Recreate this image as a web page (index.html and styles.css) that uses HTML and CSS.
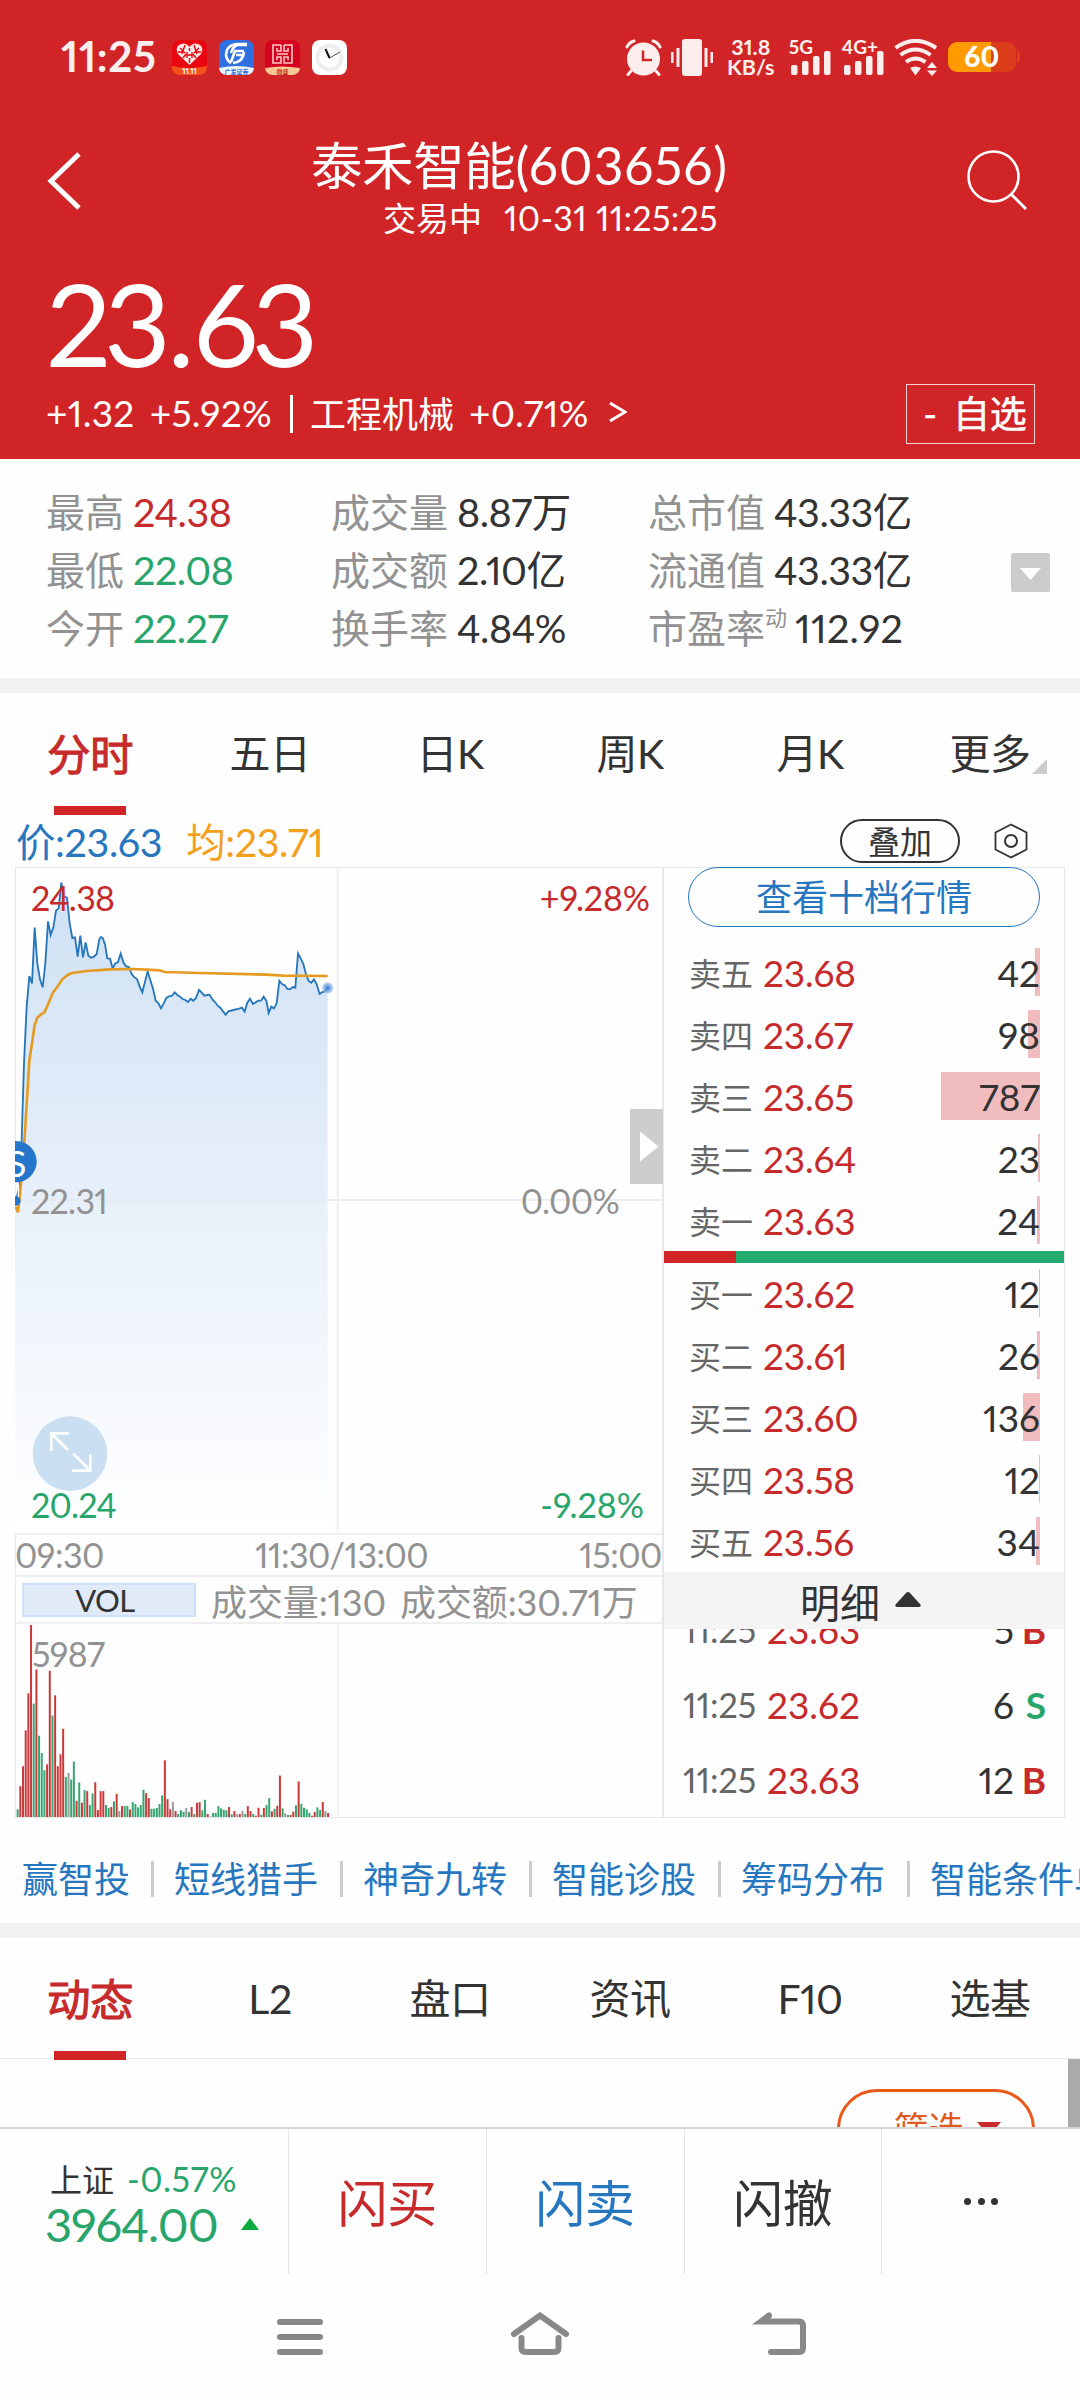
FILE: index.html
```html
<!DOCTYPE html>
<html lang="zh-CN">

<head>
    <meta charset="UTF-8">
    <meta name="viewport" content="width=device-width, initial-scale=1.0">
    <title>泰禾智能(603656)</title>
    <link rel="stylesheet" href="styles.css">
</head>

<body>

    <header class="header">
        <div class="status">
            <span class="clock">11:25</span>
            <div class="apps">
                <svg class="app" viewBox="0 0 35 35">
                    <rect width="35" height="35" rx="8" fill="#e9060f" />
                    <path d="M0 26Q17 30 35 26V28Q34 35 27 35H8Q1 35 0 28Z" fill="#f4511e" />
                    <path d="M17.500 25L6 14Q3 8 7 5Q13 1 17.500 7Q22 1 28 5Q32 8 29 14Z" fill="#ffe9e9" />
                    <path d="M8 8l5 5M13 5l-3 9M27 8l-5 5M22 5l3 9M17.500 8v3M14 14l-3 4M21 14l3 4M15 12v6M20 12v6M15 15h5M17.500 18v5M6 12h5M29 12h-5" stroke="#e9060f" stroke-width="1.400" fill="none" />
                    <text x="17.500" y="33.500" font-size="8" font-weight="700" text-anchor="middle" fill="#fff">11.11</text>
                </svg>
                <svg class="app" viewBox="0 0 35 35">
                    <rect width="35" height="35" rx="8" fill="#2f6fe0" />
                    <path d="M0 28Q17 24 35 28Q34 35 27 35H8Q1 35 0 28Z" fill="#eaf2fd" />
                    <path d="M28 4H17Q7 6 7 15Q8 21 12 23M28 5H19Q14 6 12 13M25 11H16L12 22M24 15H17M25 12Q24 22 14 23" stroke="#fff" stroke-width="2.600" fill="none" />
                    <text x="17.500" y="33.500" font-size="6" font-weight="700" text-anchor="middle" fill="#2f6fe0">广发证券</text>
                </svg>
                <svg class="app" viewBox="0 0 35 35">
                    <rect width="35" height="35" rx="8" fill="#d4021f" />
                    <path d="M0 28Q17 25 35 28Q34 35 27 35H8Q1 35 0 28Z" fill="#fbc795" />
                    <path d="M16 5H8V23H16V17H12V20M16 5V11H12V8M19 5H27V23H19V17H23V20M19 5V11H23V8M12 14H23" stroke="#ffc9c4" stroke-width="1.600" fill="none" />
                    <text x="17.500" y="33.500" font-size="6" font-weight="700" text-anchor="middle" fill="#c4321f">微盛</text>
                </svg>
                <svg class="app" viewBox="0 0 35 35">
                    <rect width="35" height="35" rx="8" fill="#fff" />
                    <circle cx="17.500" cy="17.500" r="12" fill="#fff" stroke="#eee" stroke-width="4" />
                    <path d="M17.500 18L13.500 9" stroke="#111" stroke-width="2" />
                    <path d="M17.500 18L28 12" stroke="#555" stroke-width="1" />
                </svg>
            </div>
            <div class="signals">
                <svg class="alarm" viewBox="0 0 37 37">
                    <circle cx="18.500" cy="20" r="16.500" fill="#fdeeee" />
                    <path d="M2 8Q4 3.500 9 2M35 8Q33 3.500 28 2M6 32l-3 3.500M31 32l3 3.500" stroke="#fdeeee" stroke-width="3" stroke-linecap="round" fill="none" />
                    <path d="M18 11.500V21H27" stroke="#d12426" stroke-width="2.500" fill="none" />
                </svg>
                <svg class="vibrate" viewBox="0 0 42 37" fill="#fdeeee">
                    <rect x="11" y="0" width="20" height="37" rx="3" />
                    <rect x="5.500" y="9" width="3" height="19" />
                    <rect x="33.500" y="9" width="3" height="19" />
                    <rect x="0" y="13" width="2.500" height="11" />
                    <rect x="39.500" y="13" width="2.500" height="11" />
                </svg>
                <div class="speed">31.8<br>KB/s</div>
                <div class="sim">
                    <span>5G</span>
                    <svg viewBox="0 0 40 24" fill="#fdeeee">
                        <rect y="14" width="6.500" height="10" rx="2" />
                        <rect x="11" y="10" width="6.500" height="14" rx="2" />
                        <rect x="22" y="5" width="6.500" height="19" rx="2" />
                        <rect x="33" width="6.500" height="24" rx="2" />
                    </svg>
                </div>
                <div class="sim sim2">
                    <span>4G+</span>
                    <svg viewBox="0 0 40 24" fill="#fdeeee">
                        <rect y="14" width="6.500" height="10" rx="2" />
                        <rect x="11" y="10" width="6.500" height="14" rx="2" />
                        <rect x="22" y="5" width="6.500" height="19" rx="2" />
                        <rect x="33" width="6.500" height="24" rx="2" />
                    </svg>
                </div>
                <svg class="wifi" viewBox="0 0 44 37">
                    <path d="M1.500 9Q21.500 -5.500 42 9M6.500 16Q21.500 5 36.500 16M12 23Q21.500 16 31.500 23" stroke="#fdeeee" stroke-width="4" fill="none" />
                    <path d="M16 29Q21.500 26 27 29L21.500 36.500Z" fill="#fdeeee" />
                    <path d="M33 29L38 23L43 29ZM33 31.500H43L38 37Z" fill="#fdeeee" />
                </svg>
                <div class="battery"><span>60</span></div>
            </div>
        </div>

        <div class="titlebar">
            <svg class="back" viewBox="0 0 34 58">
                <path d="M32 2L4 29L32 56" stroke="#fff" stroke-width="5" fill="none" />
            </svg>
            <div class="title">
                <h1>泰禾智能<span>(603656)</span></h1>
                <p><span>交易中</span><span class="time">10-31 11:25:25</span></p>
            </div>
            <svg class="search" viewBox="0 0 60 60">
                <circle cx="26.500" cy="26.500" r="25" stroke="#fff" stroke-width="2.600" fill="none" />
                <path d="M44.500 44.500L59 59" stroke="#fff" stroke-width="3" />
            </svg>
        </div>

        <div class="price">23<span>.</span>63</div>
        <div class="change">
            <span class="diff">+1.32</span>
            <span class="pct">+5.92%</span>
            <i class="bar"></i>
            <span class="sector">工程机械</span>
            <span class="sector-pct">+0.71%</span>
            <svg class="more" viewBox="0 0 18 22">
                <path d="M1 2L16 11L1 20" stroke="#fff" stroke-width="2.800" fill="none" />
            </svg>
            <button class="fav"><span>-</span>自选</button>
        </div>
    </header>

    <section class="stats">
        <div class="stats-grid">
            <div><label>最高</label><b class="red">24.38</b></div>
            <div><label>成交量</label><b>8.87万</b></div>
            <div><label>总市值</label><b>43.33亿</b></div>
            <div><label>最低</label><b class="green">22.08</b></div>
            <div><label>成交额</label><b>2.10亿</b></div>
            <div><label>流通值</label><b>43.33亿</b></div>
            <div><label>今开</label><b class="green">22.27</b></div>
            <div><label>换手率</label><b>4.84%</b></div>
            <div><label class="pe">市盈率<sup>动</sup></label><b>112.92</b></div>
        </div>
        <svg class="expand" viewBox="0 0 39 39">
            <rect width="39" height="39" rx="2" fill="#cbcbcb" />
            <path d="M9 15H30L19.500 27Z" fill="#fff" />
        </svg>
    </section>

    <nav class="tabs">
        <a class="active">分时</a>
        <a>五日</a>
        <a>日K</a>
        <a>周K</a>
        <a>月K</a>
        <a>更多<i class="corner"></i></a>
    </nav>

    <div class="legend">
        <span class="blue">价:23.63</span>
        <span class="orange">均:23.71</span>
        <button class="overlay">叠加</button>
        <svg class="gear" viewBox="0 0 34 36">
            <path d="M17 1.500L32.500 9.500V26.500L17 34.500L1.500 26.500V9.500Z" stroke="#333" stroke-width="1.800" fill="none" />
            <circle cx="17" cy="18" r="6" stroke="#333" stroke-width="2" fill="none" />
        </svg>
    </div>

    <main class="board">
        <div class="charts">
            <div class="price-chart">
                <!-- three units to a pixel, one minute every 8 units -->
                <svg viewBox="46 54 1947 1995">
                    <defs>
                        <linearGradient id="fill" x1="0" y1="98" x2="0" y2="2049" gradientUnits="userSpaceOnUse">
                            <stop offset="0" stop-color="#cfe1f4" />
                            <stop offset=".5" stop-color="#e8f0fa" />
                            <stop offset="1" stop-color="#fff" />
                        </linearGradient>
                        <radialGradient id="glow">
                            <stop offset="0" stop-color="#2676cb" />
                            <stop offset="1" stop-color="#9fc3ec" stop-opacity=".6" />
                        </radialGradient>
                    </defs>
                    <path id="area" fill="url(#fill)" />
                    <path d="M46 1050H1993" stroke="#e5e9f0" stroke-width="5" />
                    <path d="M1014 54V2049" stroke="#f0f0f0" stroke-width="6" />
                    <polyline id="line" fill="none" stroke="#2676bb" stroke-width="5.500" points="50,1050 58,1010 66,870 73,640 81,470 89,378 97,400 105,233 113,340 121,388 129,412 137,340 145,214 153,255 161,232 169,182 177,175 185,98 193,140 202,143 210,220 218,264 226,262 234,320 242,257 250,322 258,277 266,317 274,323 283,320 291,312 299,268 304,261 309,264 316,283 323,325 331,326 339,355 347,340 355,336 363,311 371,337 379,349 388,351 396,372 404,382 412,387 420,409 428,427 436,395 444,364 452,391 460,416 468,452 476,459 484,475 492,460 500,444 508,439 516,438 525,427 533,435 541,440 549,447 557,450 565,456 573,446 581,452 589,444 598,420 606,428 614,437 622,435 630,434 638,448 646,456 654,467 662,473 670,484 678,494 686,484 702,480 718,476 727,473 735,485 743,458 751,446 760,462 768,457 776,452 784,452 792,440 800,452 807,489 815,470 823,475 831,460 839,392 847,402 855,406 863,417 871,418 879,411 887,413 895,310 903,325 911,342 919,373 927,393 935,398 943,388 951,403 960,432 968,426 976,424 984,414" />
                    <polyline fill="none" stroke="#e59b22" stroke-width="8" points="48,1070 55,1087 60,1040 66,980 75,860 80,780 89,632 97,580 105,525 113,503 122,495 134,487 142,470 160,427 172,412 188,388 205,374 218,369 260,363 330,358 400,357 440,359 480,361 495,366 600,369 800,374 850,377 984,378" />
                    <circle cx="984" cy="414" r="17" fill="url(#glow)" />
                    <circle cx="49" cy="1053" r="14" fill="#2676cb" />
                    <path d="M46 1000H56V1040M46 1020H56" stroke="#fff" stroke-width="4" fill="none" />
                    <circle cx="49" cy="935" r="62" fill="#2676cb" />
                    <text x="50" y="980" font-size="112" text-anchor="middle" fill="#fff">S</text>
                    <circle cx="211" cy="1811" r="112" fill="#c5dcf2" fill-opacity=".9" />
                    <path d="M155 1803V1750H207M157 1752L205 1800M272 1813V1862H217M270 1860L221 1811" stroke="#fff" stroke-width="8" fill="none" />
                </svg>
                <span class="lbl top left red">24.38</span>
                <span class="lbl top right red">+9.28%</span>
                <span class="lbl mid left">22.31</span>
                <span class="lbl mid right">0.00%</span>
                <span class="lbl low left green">20.24</span>
                <span class="lbl low right green">-9.28%</span>
                <svg class="toggle" viewBox="0 0 33 75">
                    <rect width="33" height="75" fill="#cdcdcd" />
                    <path d="M10 22.500V52.500L28.500 37.500Z" fill="#fff" />
                </svg>
            </div>
            <div class="axis"><span>09:30</span><span>11:30/13:00</span><span>15:00</span></div>
            <div class="vol-info">
                <button class="vol-btn">VOL</button>
                <span>成交量:130</span>
                <span class="amount">成交额:30.71万</span>
            </div>
            <div class="vol-chart">
                <svg id="vol" viewBox="0 0 649 194">
                    <path d="M323 0V194" stroke="#f0f0f0" stroke-width="2" />
                </svg>
                <span class="lbl vol-max">5987</span>
            </div>
        </div>

        <aside class="book">
            <button class="depth">查看十档行情</button>
            <ul class="orders" id="sell"></ul>
            <div class="ratio"><i></i></div>
            <ul class="orders" id="buy"></ul>
            <div class="detail">明细
                <svg viewBox="0 0 26 15">
                    <path d="M2 15Q-1 14 1 12L11 1Q13 -1 15 1L25 12Q27 14 24 15Z" fill="#333" />
                </svg>
            </div>
            <div class="ticks">
                <ul>
                    <li><time>11:25</time><b class="red">23.63</b><span>5</span><em class="red">B</em></li>
                    <li><time>11:25</time><b class="red">23.62</b><span>6</span><em class="green">S</em></li>
                    <li><time>11:25</time><b class="red">23.63</b><span>12</span><em class="red">B</em></li>
                </ul>
            </div>
        </aside>
    </main>

    <div class="links">
        <a>赢智投</a>
        <a>短线猎手</a>
        <a>神奇九转</a>
        <a>智能诊股</a>
        <a>筹码分布</a>
        <a>智能条件单</a>
    </div>

    <nav class="tabs tabs-news">
        <a class="active">动态</a>
        <a>L2</a>
        <a>盘口</a>
        <a>资讯</a>
        <a>F10</a>
        <a>选基</a>
    </nav>

    <section class="news">
        <button class="filter">筛选<i></i></button>
        <div class="scrollbar"></div>
    </section>

    <footer class="trade">
        <div class="index">
            <p class="name">上证<span>-0.57%</span></p>
            <p class="value">3964.00<i></i></p>
        </div>
        <a class="red">闪买</a>
        <a class="blue">闪卖</a>
        <a>闪撤</a>
        <a class="dots"><i></i><i></i><i></i></a>
    </footer>

    <div class="sysnav">
        <svg viewBox="0 0 60 44">
            <path d="M10 10H50M10 25H50M10 40H50" />
        </svg>
        <svg viewBox="0 0 60 44">
            <path d="M4 22L30 3.500L56 22M11.500 26V36Q11.500 40 16 40H44Q48.500 40 48.500 36V26" />
        </svg>
        <svg viewBox="0 0 60 44">
            <path d="M19 3.500L11 9.500H49Q53 9.500 53 14V36Q53 40 49 40H21" />
        </svg>
    </div>

    <script>
        // label, price, volume, bar width
        let sell = [
            ['卖五', '23.68', 42, 5],
            ['卖四', '23.67', 98, 12],
            ['卖三', '23.65', 787, 99],
            ['卖二', '23.64', 23, 2],
            ['卖一', '23.63', 24, 3]
        ]
        let buy = [
            ['买一', '23.62', 12, 1],
            ['买二', '23.61', 26, 3],
            ['买三', '23.60', 136, 17],
            ['买四', '23.58', 12, 1],
            ['买五', '23.56', 34, 4]
        ]

        function orders(id, rows) {
            document.getElementById(id).innerHTML = rows.map(function(r) {
                return `<li><label>${r[0]}</label><b class="red">${r[1]}</b><span class="qty"><i style="width:${r[3]}px"></i><span>${r[2]}</span></span></li>`
            }).join('')
        }
        orders('sell', sell)
        orders('buy', buy)

        // close the price line down to the bottom of the chart
        let points = document.getElementById('line').getAttribute('points')
        document.getElementById('area').setAttribute('d', 'M46,2049 L46,1050 ' + points.replace(/(\S+)/g, 'L$1') + ' L984,2049Z')

        // one bar a minute: r up, g down, e unchanged
        let volume = 'g23 r93 r153 r261 r373 r579 g342 r445 g245 g193 g141 r159 r441 g306 r367 r153 r189 r266 g121 e133 ' +
            'g113 g167 r49 g104 r43 g81 r78 g36 g71 r105 r21 r78 r78 g36 g27 r30 g47 r70 e18 r33 ' +
            'g33 g34 r23 g45 g39 g29 g36 g82 r72 r57 g25 g25 g27 g39 g65 r171 r54 r23 e46 r18 ' +
            'g9 g21 g16 e27 g15 r30 g9 r43 r45 g20 g52 r9 e2 g12 g12 g33 g26 g22 g20 r30 ' +
            'g8 r18 e8 r9 e19 g9 r33 r18 g9 r4 r28 g7 r27 g36 g57 r17 g25 r34 r125 g26 ' +
            'e11 g6 r6 r16 g35 r107 g40 g28 g23 g12 r4 r15 g29 g21 r45 e18 r12'
        let colors = { r: '#c9393a', g: '#35a572', e: '#999' }
        let bars = volume.split(' ').map(function(v, i) {
            let h = v.slice(1) / 3
            return `<rect x="${(i * 2.69).toFixed(2)}" y="${(194 - h).toFixed(1)}" width="2" height="${h.toFixed(1)}" fill="${colors[v[0]]}"/>`
        })
        document.getElementById('vol').innerHTML += bars.join('')
    </script>

</body>

</html>
```
FILE: styles.css
```css
* {
    box-sizing: border-box;
}

body {
    margin: 0;
    width: 1080px;
    height: 2400px;
    overflow: hidden;
    background: #fefefe;
    color: #333;
    font-family: Lato, "Noto Sans CJK SC", sans-serif;
    font-variant-numeric: proportional-nums;
}

h1, p, ul {
    margin: 0;
    padding: 0;
    font-weight: 400;
    list-style: none;
}

b, em, i {
    font-weight: 400;
    font-style: normal;
}

button {
    padding: 0;
    background: none;
    color: inherit;
    font-family: inherit;
}

svg {
    display: block;
    flex: none;
}

span, a, label {
    white-space: nowrap;
}

.red { color: #c62a2b; }
.green { color: #27a56b; }
.blue { color: #2676c0; }
.orange { color: #f3a01c; }

/* header */
.header {
    height: 459px;
    background: #d12426;
    color: #fff;
}

.status {
    display: flex;
    align-items: center;
    height: 114px;
    padding-left: 61px;
    color: #fdeeee;
}

.clock {
    width: 111px;
    margin-top: -3px;
    font-size: 42px;
    font-weight: 700;
    letter-spacing: .6px;
}

.apps {
    display: flex;
    gap: 11.6px;
}

.app {
    width: 35px;
    height: 35px;
}

.signals {
    display: flex;
    align-items: center;
    margin-left: 278px;
}

.alarm {
    width: 37px;
    height: 37px;
}

.vibrate {
    width: 42px;
    height: 37px;
    margin-left: 9px;
}

.speed {
    width: 60px;
    margin-left: 8px;
    font-size: 21.5px;
    font-weight: 700;
    line-height: 20.5px;
    text-align: center;
}

.sim {
    position: relative;
    width: 53px;
    height: 36px;
    padding: 12px 0 0 10px;
}

.sim span {
    position: absolute;
    left: 8px;
    top: -1px;
    font-size: 19px;
    font-weight: 700;
    line-height: 18px;
}

.sim svg {
    width: 40px;
    height: 24px;
}

.wifi {
    width: 44px;
    height: 37px;
    margin-left: 7px;
}

.battery {
    position: relative;
    width: 68px;
    height: 30px;
    margin-left: 10px;
    border-radius: 9px;
    background: linear-gradient(90deg, #ff9a00 63%, #dc3e1c 63%);
    color: #fff;
    font-size: 28px;
    font-weight: 900;
    line-height: 29px;
    text-align: center;
}

.battery::after {
    content: "";
    position: absolute;
    right: -4px;
    top: 9px;
    width: 3px;
    height: 12px;
    border-radius: 0 3px 3px 0;
    background: #dc3e1c;
}

.titlebar {
    display: flex;
    align-items: flex-start;
    height: 158px;
    padding: 25px 53px 0 47px;
}

.back {
    width: 34px;
    height: 58px;
    margin-top: 13px;
}

.title {
    flex: 1;
    margin-left: 230px;
}

.title h1 {
    font-size: 51.5px;
    line-height: 52px;
    letter-spacing: -.4px;
}

.title h1 span {
    letter-spacing: .9px;
}

.title p {
    margin-top: 8px;
    padding-left: 72px;
    font-size: 33px;
    line-height: 38px;
}

.title .time {
    margin-left: 22px;
    font-size: 34px;
    letter-spacing: .3px;
}

.search {
    width: 60px;
    height: 60px;
    margin-top: 11px;
}

.price {
    height: 110px;
    padding-left: 46px;
    font-size: 115px;
    line-height: 100px;
    letter-spacing: -7px;
}

.price span {
    margin: 0 6px 0 4px;
}

.change {
    display: flex;
    align-items: center;
    height: 60px;
    padding: 0 45px 0 46px;
    font-size: 37px;
}

.diff, .pct, .sector-pct {
    letter-spacing: .3px;
}

.pct {
    margin-left: 15px;
}

.bar {
    width: 3px;
    height: 38px;
    margin: 4px 17px 0 18px;
    background: #fff;
}

.sector {
    font-size: 36px;
}

.sector-pct {
    margin-left: 15px;
}

.more {
    width: 18px;
    height: 22px;
    margin-left: 20px;
}

.fav {
    width: 129px;
    height: 60px;
    margin: 4px 0 0 auto;
    padding-left: 9px;
    border: 1px solid #f6d0d0;
    font-size: 37px;
    line-height: 56px;
    -webkit-text-stroke: .5px #fff;
}

.fav span {
    margin-right: 16px;
}

/* stats */
.stats {
    display: flex;
    align-items: center;
    height: 234px;
    padding: 7px 30px 0 46px;
    border-bottom: 15px solid #f1f1f1;
}

.stats-grid {
    display: grid;
    grid-template-columns: 285px 317px 363px;
    grid-auto-rows: 58px;
    margin-top: -5px;
    font-size: 39px;
    line-height: 58px;
}

.stats-grid label {
    display: inline-block;
    margin-right: 9px;
    color: #929292;
}

.stats-grid b {
    font-size: 39.5px;
    letter-spacing: -.5px;
}

.stats-grid .pe {
    margin-right: 8px;
}

.pe + b {
    letter-spacing: .3px;
}

.pe sup {
    font-size: 22px;
    line-height: 0;
    vertical-align: 17px;
}

.expand {
    width: 39px;
    height: 39px;
}

/* tabs */
.tabs {
    display: grid;
    grid-template-columns: repeat(6, 1fr);
    height: 120px;
    font-size: 41px;
    line-height: 122px;
    text-align: center;
}

.tabs a {
    position: relative;
    letter-spacing: -.5px;
}

.tabs .active {
    color: #c62a2b;
    font-size: 43.5px;
    -webkit-text-stroke: 1px #c62a2b;
}

.active::after {
    content: "";
    position: absolute;
    left: 54px;
    bottom: 0;
    width: 72px;
    height: 9px;
    background: #d12426;
}

.corner {
    position: absolute;
    right: 33px;
    bottom: 41px;
    border-left: 15px solid transparent;
    border-bottom: 15px solid #ccc;
}

.legend {
    display: flex;
    align-items: center;
    height: 54px;
    padding: 2px 52px 0 16px;
    font-size: 39.5px;
}

.legend span {
    margin-top: -3px;
    letter-spacing: -.4px;
}

.legend .orange {
    margin-left: 24px;
}

.overlay {
    width: 120px;
    height: 44px;
    margin: 0 34px 0 auto;
    border: 2px solid #333;
    border-radius: 22px;
    font-size: 32px;
    line-height: 41px;
}

.gear {
    width: 34px;
    height: 36px;
}

/* charts and order book */
.board {
    display: grid;
    grid-template-columns: 649px 401px;
    grid-template-rows: 951px;
    margin-left: 15px;
}

.charts {
    border: 1px solid #e8e8e8;
    border-right-width: 2px;
    color: #929292;
}

.price-chart {
    position: relative;
    height: 667px;
    border-bottom: 2px solid #efefef;
}

.price-chart > svg:first-child {
    width: 649px;
    height: 665px;
    margin-left: -1px;
}

.lbl {
    position: absolute;
    font-size: 34px;
    line-height: 34px;
    letter-spacing: -.7px;
}

.lbl.left { left: 15px; }
.lbl.top { top: 13px; }
.lbl.mid { top: 316px; }
.lbl.low { top: 620px; }
.top.right { right: 12px; letter-spacing: -.1px; }
.mid.right { right: 43px; }
.low.right { right: 18px; letter-spacing: 0; }

.toggle {
    position: absolute;
    right: -1px;
    top: 241px;
    width: 33px;
    height: 75px;
}

.axis {
    display: flex;
    justify-content: space-between;
    height: 42px;
    margin-left: -1px;
    border-bottom: 2px solid #efefef;
    font-size: 34px;
    line-height: 40px;
    letter-spacing: -.5px;
}

.vol-info {
    display: flex;
    align-items: center;
    height: 47px;
    padding-left: 6px;
    border-bottom: 2px solid #efefef;
    font-size: 36px;
    letter-spacing: -.1px;
}

.vol-btn {
    width: 174px;
    height: 34px;
    margin-right: 15px;
    padding-right: 8px;
    border: 2px solid #d0dffb;
    background: #e1eaf7;
    color: #333;
    font-size: 31px;
    line-height: 28px;
    letter-spacing: -.5px;
}

.amount {
    margin-left: 14px;
}

.vol-chart {
    position: relative;
}

.vol-chart svg {
    width: 649px;
    height: 193px;
    margin-left: -1px;
}

.vol-max {
    left: 16px;
    top: 13px;
}

.book {
    display: flex;
    flex-direction: column;
    min-height: 0;
    border: solid #e8e8e8;
    border-width: 1px 1px 1px 0;
}

.depth {
    flex: none;
    width: 352px;
    height: 60px;
    margin: -1px 0 14px 24px;
    border: 1px solid #2676c0;
    border-radius: 30px;
    color: #2676c0;
    font-size: 36px;
    line-height: 58px;
}

.orders li {
    display: flex;
    align-items: center;
    height: 62px;
    padding: 0 24px 0 25px;
    font-size: 37px;
}

.orders label {
    width: 74px;
    color: #666;
    font-size: 32px;
}

.orders b {
    letter-spacing: -.2px;
}

.qty {
    position: relative;
    display: flex;
    align-items: center;
    justify-content: flex-end;
    width: 110px;
    height: 48px;
    margin-left: auto;
}

.qty i {
    position: absolute;
    right: 0;
    top: 0;
    height: 48px;
    background: #f0bcbe;
}

.qty span {
    position: relative;
}

.ratio {
    flex: none;
    height: 12px;
    margin-bottom: -1px;
    background: #23aa6e;
}

.ratio i {
    display: block;
    width: 18%;
    height: 12px;
    background: #d12426;
}

.detail {
    flex: none;
    display: flex;
    align-items: center;
    gap: 15px;
    height: 57px;
    padding-left: 136px;
    background: #f4f4f4;
    font-size: 40px;
}

.detail svg {
    width: 26px;
    height: 15px;
    margin-top: -3px;
}

.ticks {
    flex: 1;
    display: flex;
    flex-direction: column;
    justify-content: flex-end;
    min-height: 0;
    overflow: hidden;
}

.ticks ul {
    flex: none;
}

.ticks li {
    display: flex;
    align-items: center;
    height: 75px;
    padding: 0 18px 0 19px;
    font-size: 37px;
}

.ticks time {
    width: 84px;
    color: #666;
    font-size: 34px;
}

.ticks span {
    margin-left: auto;
}

.ticks em {
    width: 32px;
    font-weight: 700;
    text-align: right;
}

/* links */
.links {
    display: flex;
    height: 120px;
    padding: 43px 0 0 1px;
    border-bottom: 15px solid #f1f1f1;
    overflow: hidden;
    color: #2676c0;
    font-size: 36px;
    line-height: 36px;
}

.links a {
    flex: none;
    height: 36px;
    padding: 0 21px;
}

.links a + a {
    padding-left: 20px;
    padding-right: 22px;
    border-left: 3px solid #ccc;
}

.tabs-news {
    height: 121px;
    border-bottom: 1px solid #e8e8e8;
}

.news {
    position: relative;
    height: 68px;
    padding: 30px 45px 0 0;
    overflow: hidden;
}

.filter {
    display: flex;
    align-items: center;
    justify-content: center;
    gap: 13px;
    width: 198px;
    height: 80px;
    margin-left: auto;
    padding: 0 0 5px 22px;
    border: 3px solid #e8591a;
    border-radius: 40px;
    color: #e0591e;
    font-size: 35px;
}

.filter i {
    border: 12px solid transparent;
    border-top: 14px solid #c62a2b;
    border-bottom: 0;
    margin-top: 4px;
}

.scrollbar {
    position: absolute;
    right: 0;
    top: 0;
    width: 12px;
    height: 68px;
    background: #aaa;
}

/* bottom */
.trade {
    display: grid;
    grid-template-columns: 289px repeat(4, 1fr);
    grid-template-rows: 145px;
    height: 147px;
    border-top: 2px solid #d5d5d5;
}

.trade > * {
    border-right: 1px solid #e5e5e5;
    font-size: 50px;
    line-height: 148px;
    text-align: center;
}

.trade > :last-child {
    border-right: 0;
}

.trade .index {
    padding: 31px 0 0 45px;
    text-align: left;
}

.index .name {
    padding-left: 5px;
    font-size: 32px;
    line-height: 38px;
}

.name span {
    margin-left: 13px;
    color: #27a56b;
    font-size: 34px;
    letter-spacing: .6px;
}

.index .value {
    display: flex;
    align-items: center;
    color: #27a56b;
    font-size: 47px;
    line-height: 50px;
    letter-spacing: -1px;
}

.value i {
    margin: 0 0 0 23px;
    border: 9px solid transparent;
    border-top: 0;
    border-bottom: 12px solid #0aab3b;
}

.trade .dots {
    display: flex;
    align-items: center;
    justify-content: center;
    gap: 6.5px;
}

.dots i {
    width: 7px;
    height: 7px;
    border-radius: 50%;
    background: #333;
}

.sysnav {
    display: flex;
    justify-content: center;
    gap: 180px;
    padding-top: 38px;
}

.sysnav svg {
    width: 60px;
    height: 44px;
    fill: none;
    stroke: #888;
    stroke-width: 6;
    stroke-linecap: round;
}
```
